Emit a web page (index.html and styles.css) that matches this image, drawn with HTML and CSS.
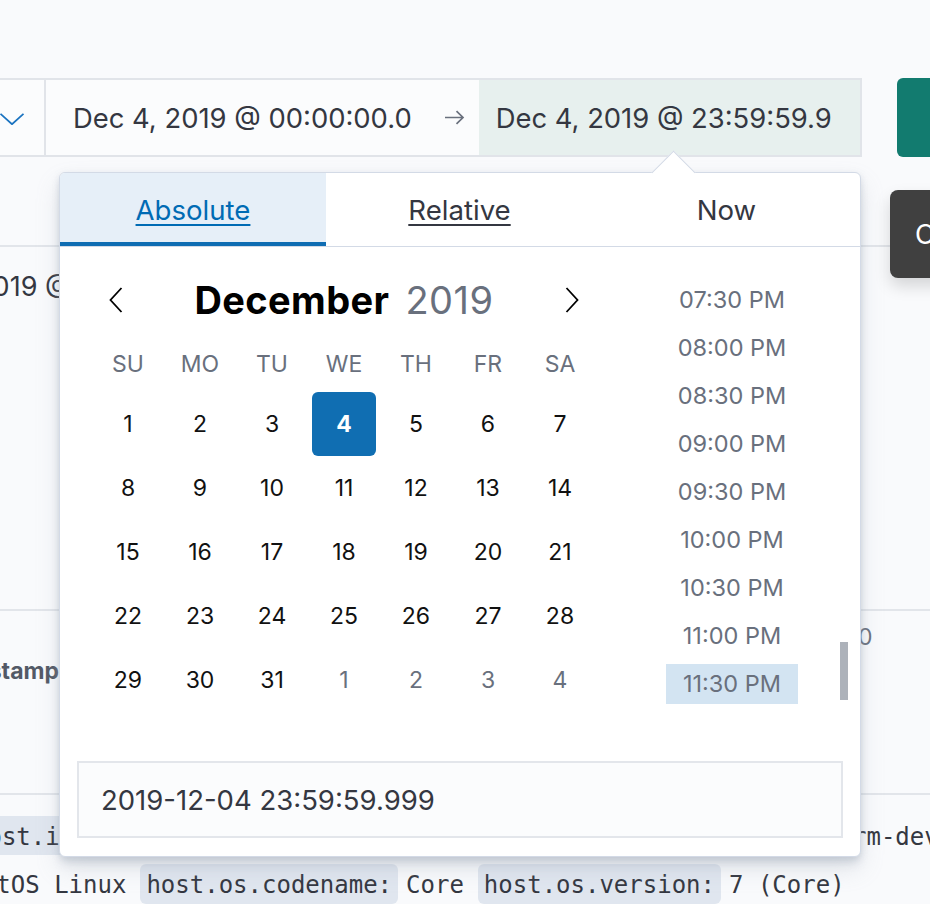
FILE: index.html
```html
<!DOCTYPE html>
<html lang="en">
<head>
<meta charset="utf-8">
<title>Date picker</title>
<link rel="stylesheet" href="styles.css">
</head>
<body>
<header class="topbar">
  <div class="range">
    <div class="quick">
      <svg class="chev-down" width="24" height="12" viewBox="0 0 24 12"><polyline points="0.5,0.8 12,11.2 23.5,0.8" fill="none" stroke="#1a73c0" stroke-width="1.8"/></svg>
    </div>
    <div class="seg seg-start">
      <span class="seg-text">Dec 4, 2019 @ 00:00:00.0</span>
      <svg class="range-arrow" width="21" height="15" viewBox="0 0 21 15"><path d="M1 7.5H19M12.5 1.2L19 7.5L12.5 13.8" fill="none" stroke="#69707d" stroke-width="1.7"/></svg>
    </div>
    <div class="seg seg-end">
      <span class="seg-text">Dec 4, 2019 @ 23:59:59.9</span>
    </div>
  </div>
  <button class="update">Update</button>
</header>

<div class="band"></div>

<section class="summary">
  <p class="summary-text">Dec 4, 2019 @ 00:00:00.000 → Dec 4, 2019 @ 23:59:59.999</p>
</section>

<section class="table-head">
  <span class="axis-label">0</span>
  <span class="col-title">@timestamp</span>
</section>

<section class="rows">
  <div class="row row-a">
    <div class="cell"><span class="badge badge-first">host.id:</span></div>
    <span class="mono">rm-dev</span>
  </div>
  <div class="row row-b">
    <span class="mono val-first">CentOS Linux</span>
    <span class="badge">host.os.codename:</span>
    <span class="mono val">Core</span>
    <span class="badge">host.os.version:</span>
    <span class="mono val">7 (Core)</span>
  </div>
</section>

<div class="tooltip">Click to apply</div>

<div class="popover">
  <div class="pop-arrow"></div>
  <nav class="tabs">
    <a class="tab tab-active">Absolute</a>
    <a class="tab tab-link">Relative</a>
    <span class="tab">Now</span>
  </nav>
  <div class="pop-body">
    <div class="picker">
      <div class="cal">
        <div class="cal-head">
          <button class="nav-btn" aria-label="Previous month">
            <svg width="14" height="26" viewBox="0 0 14 26"><polyline points="12.5,1 1.5,13 12.5,25" fill="none" stroke="#000" stroke-width="1.8"/></svg>
          </button>
          <div class="cal-title"><span class="month">December</span><span class="year">2019</span></div>
          <button class="nav-btn" aria-label="Next month">
            <svg width="14" height="26" viewBox="0 0 14 26"><polyline points="1.5,1 12.5,13 1.5,25" fill="none" stroke="#000" stroke-width="1.8"/></svg>
          </button>
        </div>
        <div class="weekdays">
          <span>SU</span><span>MO</span><span>TU</span><span>WE</span><span>TH</span><span>FR</span><span>SA</span>
        </div>
        <div class="days">
          <span>1</span><span>2</span><span>3</span><span class="day-sel">4</span><span>5</span><span>6</span><span>7</span>
          <span>8</span><span>9</span><span>10</span><span>11</span><span>12</span><span>13</span><span>14</span>
          <span>15</span><span>16</span><span>17</span><span>18</span><span>19</span><span>20</span><span>21</span>
          <span>22</span><span>23</span><span>24</span><span>25</span><span>26</span><span>27</span><span>28</span>
          <span>29</span><span>30</span><span>31</span><span class="day-out">1</span><span class="day-out">2</span><span class="day-out">3</span><span class="day-out">4</span>
        </div>
      </div>
      <ul class="times">
        <li>07:30 PM</li>
        <li>08:00 PM</li>
        <li>08:30 PM</li>
        <li>09:00 PM</li>
        <li>09:30 PM</li>
        <li>10:00 PM</li>
        <li>10:30 PM</li>
        <li>11:00 PM</li>
        <li class="time-sel">11:30 PM</li>
      </ul>
      <div class="scroll-track"><div class="scroll-thumb"></div></div>
    </div>
    <div class="date-input">2019-12-04 23:59:59.999</div>
  </div>
</div>
</body>
</html>
```

FILE: styles.css
```css
* { box-sizing: border-box; margin: 0; padding: 0; }

html, body {
  width: 930px;
  height: 904px;
  overflow: hidden;
}

body {
  position: relative;
  background: #f9fafc;
  font-family: Inter, "Noto Sans", sans-serif;
  color: #343741;
}

/* ---------- top bar ---------- */
.topbar {
  display: flex;
  margin-top: 78px;
  height: 79px;
  width: 1100px;
}

.range {
  flex-shrink: 0;
  display: flex;
  width: 862px;
  border: 2px solid #e1e4e9;
  border-left: 0;
  background: #fbfcfd;
}

.quick {
  flex-shrink: 0;
  width: 46px;
  border-right: 2px solid #e1e4e9;
  display: flex;
  align-items: center;
}

.chev-down { display: block; margin-top: 2px; }

.seg {
  display: flex;
  align-items: center;
  font-size: 27.4px;
  white-space: nowrap;
}

.seg-start {
  flex-shrink: 0;
  padding-left: 27px;
  padding-right: 14px;
}

.range-arrow { margin-left: 32px; display: block; }

.seg-end {
  flex: 1;
  background: #e7f0ee;
  padding-left: 17px;
}

.update {
  flex-shrink: 0;
  margin-left: 35px;
  width: 140px;
  border: 0;
  border-radius: 6px;
  background: #127b6f;
  color: #fff;
  font: 600 27px Inter, sans-serif;
  padding-left: 60px;
  text-align: left;
}

/* ---------- background content ---------- */
.band {
  height: 90px;
  border-bottom: 2px solid #e2e5ea;
}

.summary {
  height: 364px;
  border-bottom: 2px solid #e2e5ea;
  padding-top: 26px;
}

.summary-text {
  font-size: 27px;
  line-height: 28px;
  white-space: nowrap;
  margin-left: -114px;
}

.table-head {
  height: 184px;
  border-bottom: 2px solid #e2e5ea;
  display: grid;
  grid-template-columns: 858px auto;
  grid-template-rows: 40px 34px;
}

.axis-label {
  grid-column: 2;
  grid-row: 1;
  align-self: end;
  font-size: 23px;
  color: #69707d;
}

.col-title {
  grid-column: 1;
  grid-row: 2;
  align-self: end;
  font-size: 23px;
  font-weight: 700;
  color: #535966;
  margin-left: -84px;
  white-space: nowrap;
}

.rows { padding-top: 21px; }

.row {
  display: flex;
  align-items: center;
  white-space: nowrap;
  font-family: "DejaVu Sans Mono", "Liberation Mono", monospace;
  font-size: 24px;
  color: #343741;
}

.row-a {
  display: grid;
  grid-template-columns: 852px max-content;
  align-items: center;
  height: 39px;
}

.row-b {
  margin-top: 9px;
  height: 40px;
}

.badge {
  display: inline-flex;
  align-items: center;
  height: 40px;
  padding: 2px 6px 0;
  background: #e0e6ef;
  border-radius: 6px;
}

.row-a .badge { height: 39px; }

.mono { padding-top: 2px; }

.badge-first { margin-left: -33px; }

.val-first { margin-left: -47px; margin-right: 14px; }

.val { margin-left: 8px; margin-right: 14px; }

/* ---------- tooltip ---------- */
.tooltip {
  position: absolute;
  left: 890px;
  top: 190px;
  width: 200px;
  height: 88px;
  padding-left: 25px;
  display: flex;
  align-items: center;
  background: #404040;
  color: #fff;
  border-radius: 8px;
  font-size: 27px;
  white-space: nowrap;
  box-shadow: 0 8px 16px rgba(0, 0, 0, 0.15);
}

/* ---------- popover ---------- */
.popover {
  position: absolute;
  left: 59px;
  top: 172px;
  width: 802px;
  height: 685px;
  background: #fff;
  border: 1px solid #d3dae6;
  border-radius: 6px;
  box-shadow:
    0 12px 24px -2px rgba(152, 162, 179, 0.3),
    0 8px 8px -2px rgba(152, 162, 179, 0.25),
    0 2px 6px 0 rgba(152, 162, 179, 0.25);
}

.pop-arrow {
  position: absolute;
  left: 598px;
  top: -15.6px;
  width: 31px;
  height: 31px;
  background: #fff;
  border-top: 1px solid #d3dae6;
  border-left: 1px solid #d3dae6;
  transform: rotate(45deg);
}

.tabs {
  position: relative;
  display: grid;
  grid-template-columns: 266px 267px 267px;
  height: 74px;
  border-bottom: 1px solid #d3dae6;
}

.tab {
  display: flex;
  align-items: center;
  justify-content: center;
  font-size: 27.6px;
  color: #343741;
  padding-top: 1px;
}

.tab-active {
  background: #e6eff8;
  color: #006bb4;
  text-decoration: underline;
  text-underline-offset: 4px;
  text-decoration-thickness: 2px;
  box-shadow: inset 0 -4px 0 #0f6db3;
  border-top-left-radius: 5px;
}

.tab-link {
  text-decoration: underline;
  text-underline-offset: 4px;
  text-decoration-thickness: 2px;
}

.pop-body {
  padding: 0 17px 18px;
}

.picker {
  display: flex;
  margin-top: 25px;
  height: 440px;
}

.cal {
  flex-shrink: 0;
  margin-left: 15px;
  width: 504px;
}

.cal-head {
  display: flex;
  align-items: center;
  justify-content: space-between;
  height: 56px;
  margin-bottom: 7px;
}

.nav-btn {
  width: 48px;
  height: 48px;
  border: 0;
  background: transparent;
  display: flex;
  align-items: center;
  justify-content: center;
}

.nav-btn svg { display: block; }

.cal-title {
  display: flex;
  align-items: baseline;
  white-space: nowrap;
}

.month {
  font-size: 38px;
  font-weight: 700;
  letter-spacing: 0.4px;
  color: #000;
}

.year {
  font-size: 38px;
  letter-spacing: 0.5px;
  color: #69707d;
  margin-left: 16px;
}

.weekdays, .days {
  display: grid;
  grid-template-columns: repeat(7, 72px);
}

.weekdays {
  height: 57px;
  align-items: center;
}

.weekdays span {
  text-align: center;
  font-size: 23px;
  color: #69707d;
}

.days { grid-auto-rows: 64px; }

.days span {
  display: flex;
  align-items: center;
  justify-content: center;
  font-size: 23px;
  color: #111;
  margin: 0 4px;
  border-radius: 6px;
}

.days .day-sel {
  background: #106eb2;
  color: #fff;
  font-weight: 700;
}

.days .day-out { color: #69707d; }

.times {
  flex-shrink: 0;
  list-style: none;
  margin-left: 70px;
  width: 132px;
  padding-top: 8px;
  display: flex;
  flex-direction: column;
  gap: 8px;
}

.times li {
  height: 40px;
  line-height: 40px;
  text-align: center;
  font-size: 23.5px;
  color: #69707d;
}

.times .time-sel { background: #d3e4f2; }

.scroll-track {
  flex-shrink: 0;
  margin-left: 42px;
  width: 8px;
  display: flex;
  flex-direction: column;
  justify-content: flex-end;
  padding-bottom: 12px;
}

.scroll-thumb {
  height: 58px;
  background: #adb2ba;
}

.date-input {
  margin-top: 49px;
  height: 77px;
  border: 2px solid #e3e6eb;
  background: #fbfcfd;
  padding-left: 22px;
  display: flex;
  align-items: center;
  font-size: 27.5px;
  color: #343741;
}
```
